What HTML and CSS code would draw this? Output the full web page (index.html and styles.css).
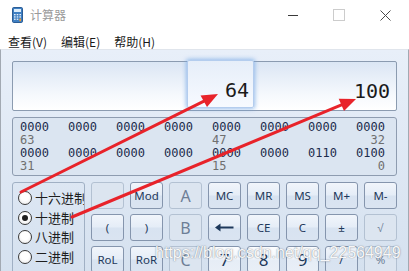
FILE: index.html
```html
<!DOCTYPE html>
<html lang="zh-CN">
<head>
<meta charset="utf-8">
<title>计算器</title>
<link rel="stylesheet" href="styles.css">
</head>
<body>
<div class="window">
  <div class="titlebar">
    <svg class="appicon" width="11" height="16" viewBox="0 0 11 16">
      <rect x="0.5" y="0.5" width="10" height="15" rx="1.2" fill="#3f7fc2" stroke="#2b5d96"/>
      <rect x="2" y="2" width="7" height="3" fill="#dcedfb"/>
      <g fill="#e6f1fb">
        <rect x="2" y="7" width="1.6" height="1.3"/><rect x="4.7" y="7" width="1.6" height="1.3"/><rect x="7.4" y="7" width="1.6" height="1.3"/>
        <rect x="2" y="9.3" width="1.6" height="1.3"/><rect x="4.7" y="9.3" width="1.6" height="1.3"/><rect x="7.4" y="9.3" width="1.6" height="1.3"/>
        <rect x="2" y="11.6" width="1.6" height="1.3"/><rect x="4.7" y="11.6" width="1.6" height="1.3"/>
      </g>
      <rect x="7.4" y="11.6" width="1.6" height="2.6" fill="#f39a2b"/>
    </svg>
    <span class="title">计算器</span>
    <div class="controls">
      <span class="ctl min"></span>
      <span class="ctl max"></span>
      <span class="ctl close">
        <svg width="11" height="11" viewBox="0 0 11 11"><path d="M0.5 0.5 L10.5 10.5 M10.5 0.5 L0.5 10.5" stroke="#4a4a4a" stroke-width="1" fill="none"/></svg>
      </span>
    </div>
  </div>
  <div class="menubar">
    <span class="menu">查看(V)</span>
    <span class="menu">编辑(E)</span>
    <span class="menu">帮助(H)</span>
  </div>
  <div class="content">
    <div class="display"><span class="value">100</span></div>
    <div class="bits">
      <div class="bitrow">
        <span>0000</span><span>0000</span><span>0000</span><span>0000</span><span>0000</span><span>0000</span><span>0000</span><span>0000</span>
      </div>
      <div class="bitrow labels">
        <span class="c1">63</span><span class="c5">47</span><span class="c8">32</span>
      </div>
      <div class="bitrow">
        <span>0000</span><span>0000</span><span>0000</span><span>0000</span><span>0000</span><span>0000</span><span>0110</span><span>0100</span>
      </div>
      <div class="bitrow labels">
        <span class="c1">31</span><span class="c5">15</span><span class="c8">0</span>
      </div>
    </div>
    <div class="lower">
      <div class="radios">
        <div class="radio"><span class="circle"></span><span class="lbl">十六进制</span></div>
        <div class="radio"><span class="circle checked"></span><span class="lbl">十进制</span></div>
        <div class="radio"><span class="circle"></span><span class="lbl">八进制</span></div>
        <div class="radio"><span class="circle"></span><span class="lbl">二进制</span></div>
      </div>
      <div class="keys">
        <div class="key disabled"></div>
        <div class="key">Mod</div>
        <div class="key disabled big">A</div>
        <div class="key">MC</div>
        <div class="key">MR</div>
        <div class="key">MS</div>
        <div class="key">M+</div>
        <div class="key">M-</div>

        <div class="key">(</div>
        <div class="key">)</div>
        <div class="key disabled big">B</div>
        <div class="key"><svg width="19" height="9" viewBox="0 0 19 9"><path d="M18.5 4.5 H3" stroke="#1e395b" stroke-width="2" fill="none"/><path d="M0 4.5 L5.5 0.5 L5.5 8.5 Z" fill="#1e395b"/></svg></div>
        <div class="key">CE</div>
        <div class="key">C</div>
        <div class="key">±</div>
        <div class="key disabled">√</div>

        <div class="key">RoL</div>
        <div class="key">RoR</div>
        <div class="key disabled big">C</div>
        <div class="key digit">7</div>
        <div class="key digit">8</div>
        <div class="key digit">9</div>
        <div class="key">/</div>
        <div class="key disabled">%</div>
      </div>
    </div>
  </div>
  <div class="popup">64</div>
  <svg class="arrows" width="409" height="271" viewBox="0 0 409 271">
    <g stroke="#e8232a" stroke-width="3" stroke-linecap="round" fill="none">
      <path d="M21 192 L204.5 100.8"/>
      <path d="M72 217 L341.5 104.9"/>
    </g>
    <g fill="#e8232a">
      <path d="M218 94 L207 107 L200.5 95.5 Z"/>
      <path d="M356 99 L344 111 L338.7 98.8 Z"/>
    </g>
  </svg>
  <div class="watermark">https://blog.csdn.net/qq_22564949</div>
</div>
</body>
</html>
```

FILE: styles.css
```css
* {
  box-sizing: border-box;
}

html,
body {
  margin: 0;
  padding: 0;
}

body {
  width: 409px;
  height: 271px;
  overflow: hidden;
  background: #ffffff;
  font-family: "Noto Sans", "Noto Sans CJK SC", sans-serif;
}

.window {
  position: relative;
  width: 409px;
  height: 271px;
  overflow: hidden;
  background: #ffffff;
}

/* Title bar */
.titlebar {
  height: 30px;
  display: flex;
  align-items: center;
  padding-left: 12px;
}

.appicon {
  display: block;
}

.title {
  margin-left: 7px;
  font: 12px/16px "Noto Sans CJK SC", sans-serif;
  color: #9a9a9a;
}

.controls {
  margin-left: auto;
  margin-right: 1px;
  display: flex;
  height: 30px;
}

.ctl {
  width: 46px;
  height: 30px;
  display: flex;
  align-items: center;
  justify-content: center;
}

.min::before {
  content: "";
  width: 10px;
  height: 1px;
  background: #3a3a3a;
}

.max::before {
  content: "";
  width: 10px;
  height: 10px;
  border: 1px solid #cccccc;
}

.close svg {
  display: block;
}

/* Menu bar */
.menubar {
  height: 19px;
  padding: 5px 0 0 8px;
  display: flex;
  gap: 14px;
  font: 12px/14px "Noto Sans CJK SC", sans-serif;
  color: #1a1a1a;
}

/* Main body */
.content {
  height: 222px;
  border-top: 1px solid #e0e5ec;
  border-left: 1px solid #a2a9b2;
  border-right: 1px solid #a2a9b2;
  padding: 11px 11px 0 11px;
  background: linear-gradient(#e8eff9, #d5e1ef);
}

.display {
  height: 50px;
  border: 1px solid #8b9bb0;
  border-radius: 2px;
  background: linear-gradient(#dbe6f4, #f6f9fd 70%, #ffffff);
  padding: 17px 6px 0 0;
  text-align: right;
}

.value {
  font: 20px/24px "DejaVu Sans Mono", monospace;
  color: #1b1b1b;
}

.bits {
  margin-top: 6px;
  height: 59px;
  border: 1px solid #8e9cb0;
  border-radius: 3px;
  background: #dbe5f1;
  padding: 3px 0 2px 7px;
}

.bitrow {
  display: grid;
  grid-template-columns: repeat(8, 29px);
  column-gap: 19px;
  height: 13px;
  font: 12px/13px "DejaVu Sans Mono", monospace;
  color: #1c2c4c;
  white-space: nowrap;
}

.bitrow.labels {
  color: #6f6f6f;
}

.c1 {
  grid-column: 1;
}

.c5 {
  grid-column: 5;
}

.c8 {
  grid-column: 8;
  justify-self: end;
}

/* Lower area */
.lower {
  margin-top: 6px;
  display: flex;
  gap: 6px;
  align-items: flex-start;
}

.radios {
  width: 73px;
  height: 100px;
  flex: none;
  border: 1px solid #a0b0c4;
  border-radius: 3px;
  padding: 5.5px 0 0 5px;
  overflow: hidden;
}

.radio {
  height: 19.5px;
  display: flex;
  align-items: center;
  gap: 3px;
  white-space: nowrap;
}

.circle {
  flex: none;
  width: 14px;
  height: 14px;
  border-radius: 50%;
  border: 1px solid #3a3a3a;
  background: radial-gradient(circle at 50% 40%, #ffffff 40%, #e6e6e6);
  display: flex;
  align-items: center;
  justify-content: center;
}

.circle.checked::after {
  content: "";
  width: 6px;
  height: 6px;
  border-radius: 50%;
  background: #1f1f1f;
}

.lbl {
  font: 13px/16px "Noto Sans CJK SC", sans-serif;
  color: #1e1e1e;
}

.keys {
  display: grid;
  grid-template-columns: repeat(8, 33px);
  grid-auto-rows: 27px;
  column-gap: 6px;
  row-gap: 5px;
}

.key {
  display: flex;
  align-items: center;
  justify-content: center;
  border: 1px solid #8595ad;
  border-radius: 3px;
  background: linear-gradient(#f1f5fb, #e5edf7 48%, #d8e3f1 52%, #dae4f1);
  font: 11.5px/14px "Noto Sans", sans-serif;
  color: #1e395b;
}

.key svg {
  display: block;
}

.key.digit {
  background: linear-gradient(#fdfeff, #f2f6fb 48%, #e6edf6 52%, #e9eff7);
  font-size: 17px;
  line-height: 20px;
}

.key.big {
  font-size: 16px;
  line-height: 20px;
}

.key.disabled {
  border-color: #b3c1d2;
  background: #dce5f0;
  color: #6d7e96;
}

/* Overlays */
.popup {
  position: absolute;
  left: 187px;
  top: 60px;
  width: 67px;
  height: 48px;
  border: 1px solid #b4cdee;
  border-radius: 2px;
  box-shadow: 0 0 4px 1px rgba(120, 170, 230, 0.75);
  background: linear-gradient(#e6eef9, #f7faff);
  padding: 17px 4px 0 0;
  text-align: right;
  font: 20px/24px "DejaVu Sans Mono", monospace;
  color: #1b1b1b;
}

.arrows {
  position: absolute;
  left: 0;
  top: 0;
  pointer-events: none;
}

.watermark {
  position: absolute;
  left: 155px;
  top: 244px;
  font: 16px/18px "Liberation Sans", sans-serif;
  color: rgba(255, 255, 255, 0.95);
  text-shadow: 0 0 1px rgba(90, 100, 115, 0.7), 0 0 2px rgba(90, 100, 115, 0.35);
  white-space: nowrap;
  pointer-events: none;
}
```
